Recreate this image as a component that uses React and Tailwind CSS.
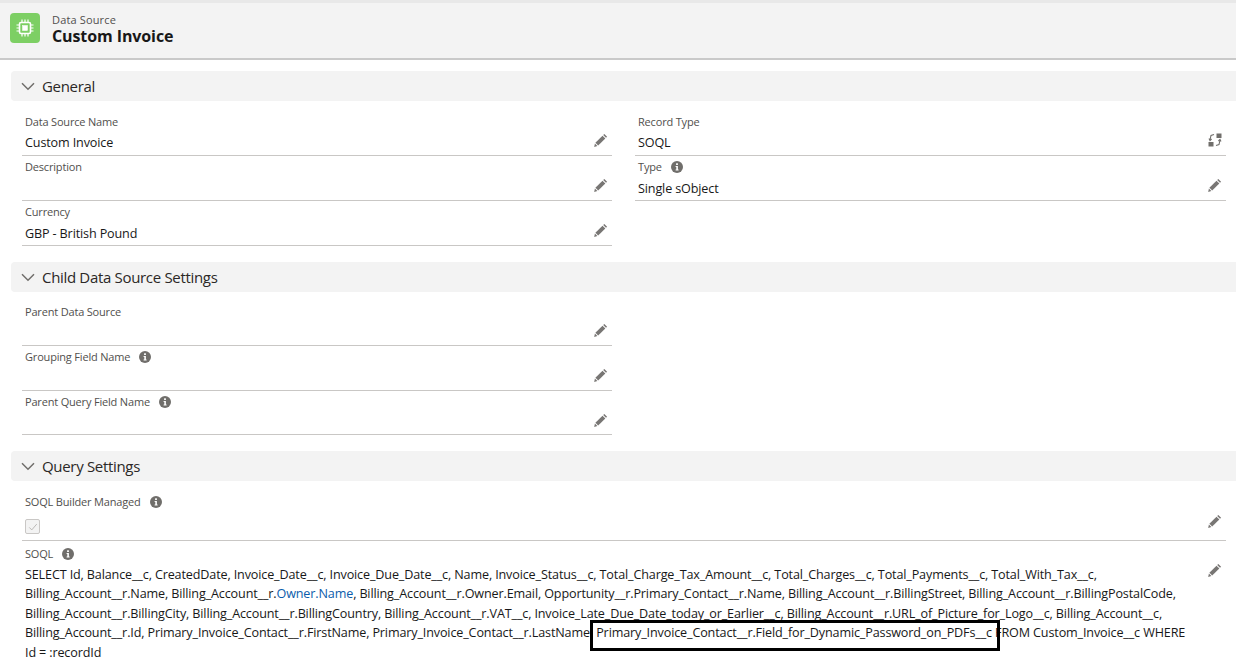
import React from "react";

function Pencil({ className = "" }) {
  return (
    <svg viewBox="0 0 14 14" className={`w-[14px] h-[14px] ${className}`} fill="#787674">
      <path d="M10.3 0.9 L13.1 3.7 L12 4.8 L9.2 2 Z" />
      <path d="M8.5 2.7 L11.3 5.5 L4.2 12.6 L1.4 9.8 Z" />
      <path d="M0.9 10.6 L3.4 13.1 L0.2 13.9 Z" />
    </svg>
  );
}

function Info() {
  return (
    <svg viewBox="0 0 12 12" className="w-3 h-3 ml-[9px] shrink-0">
      <circle cx="6" cy="6" r="6" fill="#706e6b" />
      <rect x="5.1" y="2.3" width="1.8" height="1.7" fill="#fff" />
      <path d="M4.6 5 H6.9 V8.5 H7.6 V9.6 H4.6 V8.5 H5.3 V6.1 H4.6 Z" fill="#fff" />
    </svg>
  );
}

function Switch() {
  return (
    <svg viewBox="0 0 14 14" className="w-[14px] h-[14px]">
      <rect x="8.5" y="0.5" width="5" height="4.5" fill="#706e6b" />
      <rect x="0.5" y="9" width="5" height="4.5" fill="#706e6b" />
      <path d="M6 1.5 L3 2.5 L2 7" fill="none" stroke="#706e6b" strokeWidth="1.1" />
      <path d="M1 5.6 L2 7.6 L3.6 6" fill="none" stroke="#706e6b" strokeWidth="1.1" />
      <path d="M8 12.5 L11 11.5 L12 7" fill="none" stroke="#706e6b" strokeWidth="1.1" />
      <path d="M10.4 8 L12 6.4 L13 8.4" fill="none" stroke="#706e6b" strokeWidth="1.1" />
    </svg>
  );
}

function Chevron() {
  return (
    <svg viewBox="0 0 14 14" className="w-[14px] h-[14px] ml-[10px] mr-[7px]" fill="none" stroke="#706e6b" strokeWidth="1.5">
      <path d="M1 4.2 L7 10.2 L13 4.2" />
    </svg>
  );
}

function Section({ title }) {
  return (
    <div className="h-[30px] ml-[11px] bg-[#f3f3f3] rounded-l-[4px] flex items-center">
      <Chevron />
      <span className="pt-px text-[15px] text-[#2b2826] tracking-[-0.32px]">{title}</span>
    </div>
  );
}

function Field({ label, value, info, icon = "pencil", h = "h-[45px]", leading = "leading-[27px]" }) {
  return (
    <div className={`relative ${h} border-b border-[#c9c7c5] pl-[3px]`}>
      <div className="flex items-center h-[19px] pt-[3px] text-[11px] leading-[16px] text-[#514f4d] tracking-[-0.18px]">
        <span>{label}</span>
        {info && <Info />}
      </div>
      <div className={`h-[23px] text-[12.6px] ${leading} text-[#181818] tracking-[-0.14px] whitespace-nowrap`}>{value}</div>
      <div className="absolute right-[4px] top-[22px]">
        {icon === "pencil" ? <Pencil /> : <Switch />}
      </div>
    </div>
  );
}

export default function App() {
  return (
    <div className="relative w-[1236px] h-[662px] overflow-hidden bg-white" style={{ fontFamily: '"Open Sans", "Noto Sans", sans-serif' }}>
      <header className="h-[60px] bg-[#f3f3f3] border-t-[3px] border-[#e8e8e8] border-b-2 border-b-[#c9c9c9] flex items-start pl-[10px] pt-[10px]">
        <div className="w-[30px] h-[30px] rounded-[4px] bg-[#7dcf64] flex items-center justify-center">
          <svg viewBox="0 0 20 20" className="w-[20px] h-[20px]" fill="none" stroke="#fff">
            <rect x="4.5" y="4.5" width="11" height="11" rx="1.5" strokeWidth="1.6" />
            <rect x="7.5" y="7.5" width="5" height="5" fill="#fff" strokeWidth="0.5" />
            <path d="M7 1.5V4M10 1.5V4M13 1.5V4M7 16V18.5M10 16V18.5M13 16V18.5M1.5 7H4M1.5 10H4M1.5 13H4M16 7H18.5M16 10H18.5M16 13H18.5" strokeWidth="1.2" />
          </svg>
        </div>
        <div className="ml-[12px] -mt-[1px]">
          <div className="text-[11px] leading-[15px] text-[#514f4d] tracking-[0.15px]">Data Source</div>
          <div className="text-[16px] leading-[19px] font-bold text-[#181818] tracking-[-0.1px]">Custom Invoice</div>
        </div>
      </header>

      <div className="pt-[11px]">
        <Section title="General" />
        <div className="grid grid-cols-[590px_591px] gap-x-[23px] pl-[22px] pt-[10px]">
          <div>
            <Field label="Data Source Name" value="Custom Invoice" leading="leading-[25px]" />
            <Field label="Description" value="" />
            <Field label="Currency" value="GBP - British Pound" />
          </div>
          <div>
            <Field label="Record Type" value="SOQL" icon="switch" leading="leading-[25px]" />
            <Field label="Type" value="Single sObject" info />
          </div>
        </div>

        <div className="mt-[16px]"><Section title="Child Data Source Settings" /></div>
        <div className="w-[590px] ml-[22px] pt-[9px]">
          <Field label="Parent Data Source" value="" />
          <Field label="Grouping Field Name" value="" info />
          <Field label="Parent Query Field Name" value="" info h="h-[44px]" />
        </div>

        <div className="mt-[16px]"><Section title="Query Settings" /></div>
        <div className="ml-[22px] w-[1204px] pt-[12px]">
          <div className="relative h-[48px] border-b border-[#c9c7c5] pl-[3px]">
            <div className="flex items-center h-[18px] text-[11px] leading-[16px] text-[#514f4d] tracking-[-0.18px]">
              <span>SOQL Builder Managed</span>
              <Info />
            </div>
            <div className="mt-[8px] w-[15px] h-[15px] border border-[#c9c7c5] rounded-[2px] bg-[#f3f3f3] flex items-center justify-center">
              <svg viewBox="0 0 12 12" className="w-[10px] h-[10px]" fill="none" stroke="#b0adab" strokeWidth="1"><path d="M1.5 6.5 L4.5 9.5 L10.5 2.5" /></svg>
            </div>
            <div className="absolute right-[4px] bottom-[12px]"><Pencil /></div>
          </div>
          <div className="relative pl-[3px]">
            <div className="flex items-center h-[22px] pt-[4px] text-[11px] leading-[16px] text-[#514f4d] tracking-[-0.18px]">
              <span>SOQL</span>
              <Info />
            </div>
            <div className="text-[12.6px] leading-[19.5px] text-[#181818] tracking-[-0.14px] mt-[1.8px] w-[1170px]">
              SELECT Id, Balance__c, CreatedDate, Invoice_Date__c, Invoice_Due_Date__c, Name, Invoice_Status__c, Total_Charge_Tax_Amount__c, Total_Charges__c, Total_Payments__c, Total_With_Tax__c, Billing_Account__r.Name, Billing_Account__r.<span className="text-[#0b5cab]">Owner.Name</span>, Billing_Account__r.Owner.Email, Opportunity__r.Primary_Contact__r.Name, Billing_Account__r.BillingStreet, Billing_Account__r.BillingPostalCode, Billing_Account__r.BillingCity, Billing_Account__r.BillingCountry, Billing_Account__r.VAT__c, Invoice_Late_Due_Date_today_or_Earlier__c, Billing_Account__r.URL_of_Picture_for_Logo__c, Billing_Account__c, Billing_Account__r.Id, Primary_Invoice_Contact__r.FirstName, Primary_Invoice_Contact__r.LastName, Primary_Invoice_Contact__r.Field_for_Dynamic_Password_on_PDFs__c FROM Custom_Invoice__c WHERE Id = :recordId
            </div>
            <div className="absolute right-[4px] top-[22px]"><Pencil /></div>
          </div>
        </div>
      </div>

      <div className="absolute left-[590px] top-[620px] w-[410px] h-[31px] border-[3px] border-black" />
    </div>
  );
}
